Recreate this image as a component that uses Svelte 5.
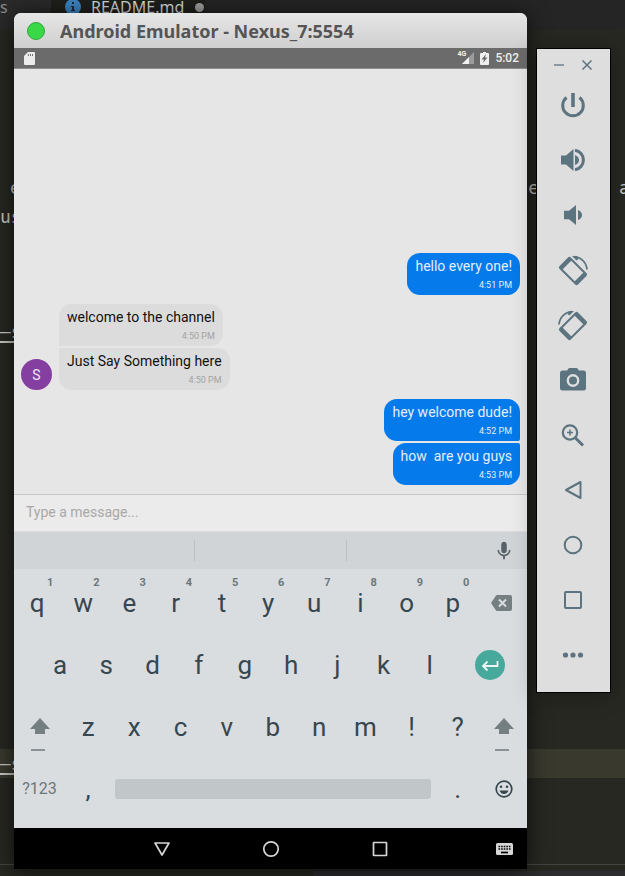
<script>
  const messages = [
    { side: 'sent', items: [{ text: 'hello every one!', time: '4:51 PM' }] },
    {
      side: 'received',
      avatar: 'S',
      items: [
        { text: 'welcome to the channel', time: '4:50 PM' },
        { text: 'Just Say Something here', time: '4:50 PM' }
      ]
    },
    {
      side: 'sent',
      items: [
        { text: 'hey welcome dude!', time: '4:52 PM' },
        { text: 'how  are you guys', time: '4:53 PM' }
      ]
    }
  ];
  const rowOne = [...'qwertyuiop'].map((letter, i) => ({ letter, digit: (i + 1) % 10 }));
  const rowTwo = [...'asdfghjkl'];
  const rowThree = [...'zxcvbnm!?'];
  let draft = $state('');
</script>

{#snippet shiftKey()}
  <button class="key shift" aria-label="Shift">
    <svg width="22" height="36" viewBox="0 0 22 36">
      <path d="M11 1 21 12h-5v5H6v-5H1z" fill="#757f82" />
      <path d="M2 32h14v2H2z" fill="#8b9295" />
    </svg>
  </button>
{/snippet}

<div class="desktop">
  <div class="editor" aria-hidden="true">
    <div class="tabs">
      <div class="tab first">s</div>
      <div class="tab active">
        <svg width="16" height="16" viewBox="0 0 16 16">
          <circle cx="8" cy="7" r="8" fill="#3a86c6" />
          <path d="M7 2h2v2H7zM6 6h3v4h1v1H6v-1h1V7H6z" fill="#1d2a36" />
        </svg>
        <span>README.md</span>
        <i class="dirty"></i>
      </div>
    </div>
    <div class="code">
      <div class="line split"><span class="lead">e</span><span>e</span><span class="last">a</span></div>
      <div class="line">us</div>
      <div class="line rule"><u>—s</u></div>
      <div class="line current"><u>—s</u></div>
    </div>
    <div class="panel"><div></div></div>
  </div>

  <main class="emulator">
    <header class="title">
      <button class="dot" aria-label="Window menu"></button>
      <h1>Android Emulator - Nexus_7:5554</h1>
    </header>

    <div class="status">
      <svg width="11" height="13" viewBox="0 0 11 13">
        <path d="M4 0h6q1 0 1 1v11q0 1-1 1H1q-1 0-1-1V4z" fill="#ececec" />
        <path d="M4 2h1v2H4zM6 2h1v2H6zM8 2h1v2H8z" fill="#777" />
      </svg>
      <div class="indicators">
        <span class="net">4G</span>
        <svg width="12" height="12" viewBox="0 0 12 12">
          <path d="M12 0v12H0z" fill="#9b9b9b" />
          <path d="M7 5v7H0z" fill="#f0f0f0" />
        </svg>
        <svg class="battery" width="9" height="13" viewBox="0 0 9 13">
          <path d="M3 0h3v1h2q1 0 1 1v10q0 1-1 1H1q-1 0-1-1V2q0-1 1-1h2z" fill="#f0f0f0" />
          <path d="M6 2 1.500 7.500H4L3 11l4.500-5.500H5z" fill="#6b6b6b" />
        </svg>
        <time>5:02</time>
      </div>
    </div>

    <section class="chat">
      {#each messages as group}
        <div class="group {group.side}">
          {#if group.avatar}<div class="avatar">{group.avatar}</div>{/if}
          <div class="stack">
            {#each group.items as item}
              <div class="bubble">
                <p>{item.text}</p>
                <time>{item.time}</time>
              </div>
            {/each}
          </div>
        </div>
      {/each}
    </section>

    <div class="composer">
      <input type="text" aria-label="Message" placeholder="Type a message..." bind:value={draft} />
    </div>

    <section class="keyboard">
      <div class="suggest">
        <span></span>
        <span></span>
        <span></span>
        <button class="key" aria-label="Voice input">
          <svg width="22" height="22" viewBox="0 0 24 24" fill="#566268">
            <path d="M12 14.500c1.660 0 3-1.340 3-3V5c0-1.660-1.340-3-3-3S9 3.340 9 5v6.500c0 1.660 1.340 3 3 3zm5.300-3.500c0 3-2.540 5.100-5.300 5.100S6.700 14 6.700 11H5c0 3.410 2.720 6.230 6 6.720V21h2v-3.280c3.280-.480 6-3.300 6-6.720h-1.700z" />
          </svg>
        </button>
      </div>
      <div class="keys">
        <div class="row one">
          {#each rowOne as k}
            <button class="key">{k.letter}<sup>{k.digit}</sup></button>
          {/each}
          <button class="key" aria-label="Backspace">
            <svg width="21" height="16" viewBox="0 0 21 16">
              <path d="M6 0h13q2 0 2 2v12q0 2-2 2H6q-1 0-2-2L0 8l4-6q1-2 2-2z" fill="#757f82" />
              <path d="m8 4.500 7 7m0-7-7 7" stroke="#d9dde0" stroke-width="2" />
            </svg>
          </button>
        </div>
        <div class="row two">
          <span></span>
          {#each rowTwo as k}<button class="key">{k}</button>{/each}
          <button class="key" aria-label="Enter">
            <svg width="30" height="30" viewBox="0 0 30 30">
              <circle cx="15" cy="15" r="15" fill="#47a99c" />
              <path d="M22.500 11v5H8m4.500-4.500L8 16l4.500 4.500" fill="none" stroke="#eef6f5" stroke-width="1.800" />
            </svg>
          </button>
        </div>
        <div class="row three">
          {@render shiftKey()}
          {#each rowThree as k}<button class="key">{k}</button>{/each}
          {@render shiftKey()}
        </div>
        <div class="row four">
          <button class="key mode">?123</button>
          <button class="key">,</button>
          <button class="key" aria-label="Space"><i class="space"></i></button>
          <button class="key">.</button>
          <button class="key" aria-label="Emoji">
            <svg width="18" height="18" viewBox="0 0 18 18">
              <circle cx="9" cy="9" r="7.800" fill="none" stroke="#37474f" stroke-width="1.700" />
              <circle cx="6" cy="6.700" r="1.300" fill="#37474f" />
              <circle cx="12" cy="6.700" r="1.300" fill="#37474f" />
              <path d="M4.500 10.500h9Q12 14 9 14t-4.500-3.500z" fill="#37474f" />
            </svg>
          </button>
        </div>
      </div>
    </section>

    <nav class="navbar">
      <span></span>
      <button class="key" aria-label="Back">
        <svg width="18" height="18" viewBox="0 0 18 18"><path d="M2 3h14L9 15z" /></svg>
      </button>
      <button class="key" aria-label="Home">
        <svg width="18" height="18" viewBox="0 0 18 18"><circle cx="9" cy="9" r="7.200" /></svg>
      </button>
      <button class="key" aria-label="Overview">
        <svg width="18" height="18" viewBox="0 0 18 18"><rect x="2.500" y="2.500" width="13" height="13" rx="0.500" /></svg>
      </button>
      <button class="key ime" aria-label="Switch keyboard">
        <svg width="17" height="12" viewBox="0 0 17 12">
          <rect class="solid" width="17" height="12" rx="1.500" />
          <path class="holes" d="M2.500 3.500h12M2.500 6h12" stroke-dasharray="1.600 1" />
          <path class="holes" d="M5 9.500h7" />
        </svg>
      </button>
    </nav>
  </main>

  <aside class="tools">
    <div class="winbar">
      <button aria-label="Minimize">
        <svg width="12" height="12" viewBox="0 0 12 12"><path d="M1 6h10" stroke-width="1.300" /></svg>
      </button>
      <button aria-label="Close">
        <svg width="12" height="12" viewBox="0 0 12 12"><path d="m1.500 1.500 9 9m0-9-9 9" stroke-width="1.500" /></svg>
      </button>
    </div>
    <button aria-label="Power">
      <svg width="32" height="32" viewBox="0 0 32 32">
        <path d="M16 4v14" stroke-width="3.600" />
        <path d="M9.500 8.500a10.300 10.300 0 1 0 13 0" stroke-width="3" />
      </svg>
    </button>
    <button aria-label="Volume up">
      <svg width="32" height="32" viewBox="0 0 32 32">
        <path class="fill" d="M4 11.500h5L16.500 5v22L9 20.500H4z" />
        <path class="fill" d="M18 11q4 1.500 4 5t-4 5z" />
        <path d="M18 6.300a9.800 9.800 0 0 1 0 19.400" stroke-width="3" />
      </svg>
    </button>
    <button aria-label="Volume down">
      <svg width="32" height="32" viewBox="0 0 32 32">
        <path class="fill" d="M7 11.800h5L19 6v20l-7-5.800H7z" />
        <path class="fill" d="M21 11q4 1.500 4 5t-4 5z" />
      </svg>
    </button>
    <button aria-label="Rotate left">
      <svg width="32" height="32" viewBox="0 0 32 32">
        <path class="fill" fill-rule="evenodd" transform="rotate(45 16 17)" d="M5 9h22q2 0 2 2v12q0 2-2 2H5q-2 0-2-2V11q0-2 2-2zM7.500 11v12h17V11z" />
        <path d="M17 2.600A13.800 13.800 0 0 1 30 15.500" stroke-width="1.700" />
        <path class="fill" d="M15 2h5l1.500 3-2 1.500z" />
      </svg>
    </button>
    <button aria-label="Rotate right">
      <svg width="32" height="32" viewBox="0 0 32 32">
        <g transform="matrix(-1 0 0 1 32 0)">
          <path class="fill" fill-rule="evenodd" transform="rotate(45 16 17)" d="M5 9h22q2 0 2 2v12q0 2-2 2H5q-2 0-2-2V11q0-2 2-2zM7.500 11v12h17V11z" />
          <path d="M17 2.600A13.800 13.800 0 0 1 30 15.500" stroke-width="1.700" />
          <path class="fill" d="M15 2h5l1.500 3-2 1.500z" />
        </g>
      </svg>
    </button>
    <button aria-label="Take screenshot">
      <svg width="32" height="32" viewBox="0 0 32 32">
        <path class="fill" d="M12 4h8l2 2.500h4.500Q29 6.500 29 9v15q0 2.500-2.500 2.500h-21Q3 26.500 3 24V9q0-2.500 2.500-2.500H10z" />
        <circle class="lens" cx="16" cy="16.500" r="5.200" stroke-width="2.400" />
      </svg>
    </button>
    <button aria-label="Zoom in">
      <svg width="32" height="32" viewBox="0 0 32 32">
        <circle cx="13" cy="13.500" r="7.200" stroke-width="2.200" />
        <path d="M13 10.500v6m-3-3h6" stroke-width="1.500" />
        <path d="m18.500 19 7.500 7.500" stroke-width="3" />
      </svg>
    </button>
    <button aria-label="Back">
      <svg width="32" height="32" viewBox="0 0 32 32"><path d="M9 16 23.500 8v16z" stroke-width="2" stroke-linejoin="round" /></svg>
    </button>
    <button aria-label="Home">
      <svg width="32" height="32" viewBox="0 0 32 32"><circle cx="16" cy="16" r="8.300" stroke-width="2" /></svg>
    </button>
    <button aria-label="Overview">
      <svg width="32" height="32" viewBox="0 0 32 32"><rect x="8" y="8" width="16" height="16" rx="1" stroke-width="2" /></svg>
    </button>
    <button aria-label="More">
      <svg width="32" height="32" viewBox="0 0 32 32">
        <circle class="fill" cx="8.500" cy="16" r="2.600" /><circle class="fill" cx="16" cy="16" r="2.600" /><circle class="fill" cx="23.500" cy="16" r="2.600" />
      </svg>
    </button>
  </aside>
</div>

<style>
  :global(body) { margin: 0; background: #272822; }
  * { box-sizing: border-box; }
  button { padding: 0; border: 0; background: none; font: inherit; color: inherit; cursor: pointer; }
  svg { display: block; flex: none; }
  h1, p { margin: 0; }

  .desktop {
    position: relative;
    display: flex;
    align-items: stretch;
    gap: 9px;
    min-height: 100vh;
    padding: 13px 14px 7px;
    overflow: hidden;
    font-family: Roboto, sans-serif;
  }

  .editor {
    position: absolute;
    inset: 0;
    display: flex;
    flex-direction: column;
    background: #272822;
    color: #c9c9c4;
    font: 18px/29px "DejaVu Sans Mono", monospace;
  }
  .tabs {
    display: flex;
    height: 29px;
    background: #252526;
    font: 16px/14px "Noto Sans", sans-serif;
  }
  .tab { width: 51px; color: #8c8c8c; background: #2a2a2a; }
  .tab.active {
    display: flex;
    align-items: flex-start;
    gap: 10px;
    width: auto;
    padding-left: 14px;
    color: #d8d8d8;
    background: #1f201c;
  }
  .dirty { width: 9px; height: 9px; margin: 3px 1px; border-radius: 50%; background: #a0a0a0; }
  .code { flex: 1; padding-top: 144px; }
  .line { height: 29px; white-space: nowrap; }
  .split { display: flex; padding-left: 10px; }
  .lead { flex: 1; }
  .last { width: 6px; margin-left: 80px; }
  .rule { margin-top: 86px; }
  .current { margin-top: 403px; background: #3a392e; }
  u { text-decoration-thickness: 2px; text-underline-offset: 3px; }
  .panel { height: 12px; border-top: 1px solid #444540; padding: 6px 0 0 50%; }
  .panel div { height: 5px; background: #2d2d30; }

  .emulator {
    position: relative;
    flex: 1;
    min-width: 0;
    display: flex;
    flex-direction: column;
    border-radius: 7px 7px 0 0;
    background: #e6e6e6;
    box-shadow: 0 2px 22px rgba(0, 0, 0, 0.7);
  }
  .title {
    display: flex;
    align-items: center;
    gap: 15px;
    height: 35px;
    padding: 0 13px;
    border-radius: 7px 7px 0 0;
    background: linear-gradient(#e6e6e6, #cfcfcf);
    color: #555;
  }
  .dot { width: 18px; height: 18px; border: 1px solid #32a83c; border-radius: 50%; background: #38d846; }
  h1 { font: 700 18px/24px "Noto Sans", sans-serif; white-space: nowrap; }

  .status {
    display: flex;
    align-items: center;
    justify-content: space-between;
    height: 21px;
    padding: 0 8px 0 10px;
    border-bottom: 1px solid #8e8e8e;
    background: #6b6b6b;
    color: #f0f0f0;
  }
  .indicators { display: flex; align-items: center; }
  .net { align-self: flex-start; margin: 2px -4px 0 0; font: 700 7px/8px Roboto, sans-serif; }
  .battery { margin: 0 6px; }
  .status time { font: 500 12px/20px Roboto, sans-serif; }

  .chat {
    flex: 1;
    display: flex;
    flex-direction: column;
    justify-content: flex-end;
    gap: 9px;
    padding: 9px 7px;
  }
  .group { display: flex; align-items: flex-end; gap: 7px; }
  .sent { justify-content: flex-end; }
  .stack { display: flex; flex-direction: column; gap: 2px; align-items: flex-start; }
  .sent .stack { align-items: flex-end; }
  .avatar {
    width: 31px;
    height: 31px;
    border-radius: 50%;
    background: #853fa0;
    color: #f0e8f3;
    font-size: 14px;
    line-height: 32px;
    text-align: center;
  }
  .bubble { height: 42px; padding: 3px 8px 0; border-radius: 13px; background: #dcdcdc; color: #111; }
  .bubble p { font-size: 14px; line-height: 20px; white-space: pre; }
  .bubble time { display: block; color: #a3a3a3; font-size: 9px; line-height: 18px; text-align: right; }
  .sent .bubble { background: #047aeb; color: #e4eefa; }
  .sent .bubble time { color: #e4eefa; }
  .received .bubble:not(:last-child) { border-bottom-left-radius: 2px; }
  .received .bubble:not(:first-child) { border-top-left-radius: 2px; }
  .sent .bubble:not(:last-child) { border-bottom-right-radius: 2px; }
  .sent .bubble:not(:first-child) { border-top-right-radius: 2px; }

  .composer { height: 38px; border-top: 1px solid #c6c6c6; border-bottom: 1px solid #dcdddd; background: #ebebeb; }
  input {
    display: block;
    width: 100%;
    height: 34px;
    padding: 0 12px;
    border: 0;
    outline: 0;
    background: transparent;
    color: #222;
    font: 14px/20px Roboto, sans-serif;
  }
  input::placeholder { color: #a8a8a8; opacity: 1; }

  .keyboard { background: #d9dde0; color: #37474f; }
  .suggest {
    display: grid;
    grid-template-columns: 181fr 152fr 133fr 47fr;
    align-items: center;
    height: 37px;
    background: #d0d4d7;
  }
  .suggest span { height: 21px; }
  .suggest span:nth-child(-n + 2) { border-right: 1px solid #bbc0c3; }
  .keys { padding: 3px 0 8px; }
  .row { display: grid; height: 62px; }
  .one { grid-template-columns: repeat(10, 231fr) 255fr; }
  .two { grid-template-columns: 115fr repeat(9, 231fr) 371fr; }
  .three { grid-template-columns: 255fr repeat(9, 231fr) 231fr; }
  .four { grid-template-columns: 255fr 231fr 1617fr 231fr 231fr; }
  .key {
    position: relative;
    display: flex;
    align-items: center;
    justify-content: center;
    min-width: 0;
    font-size: 26px;
    line-height: 30px;
  }
  .key sup {
    position: absolute;
    top: 5px;
    left: 50%;
    margin-left: 10px;
    color: #6c777b;
    font: 700 11px/12px Roboto, sans-serif;
  }
  .shift { padding-top: 16px; }
  .mode { font-size: 16px; color: #6c777b; }
  .space { width: 100%; height: 20px; margin: 0 4px; border-radius: 3px; background: #c1c6c9; }

  .navbar {
    display: grid;
    grid-template-columns: 93fr 109fr 109fr 109fr 93fr;
    height: 41px;
    background: #000;
  }
  .navbar svg { fill: none; stroke: #d6d6d6; stroke-width: 1.700; stroke-linejoin: round; }
  .navbar .solid { fill: #d6d6d6; stroke: none; }
  .navbar .holes { stroke: #000; }
  .ime { justify-content: flex-end; padding-right: 14px; }

  .tools {
    position: relative;
    align-self: flex-start;
    display: flex;
    flex-direction: column;
    width: 75px;
    margin-top: 35px;
    padding: 0 2px 10px 0;
    border: 1px solid #000;
    background: #dedede;
    box-shadow: 0 2px 22px rgba(0, 0, 0, 0.3);
  }
  .tools button { display: flex; align-items: center; justify-content: center; height: 55px; }
  .tools svg { fill: none; stroke: #5c7480; }
  .tools .fill { fill: #5c7480; stroke: none; }
  .tools .lens { stroke: #dedede; }
  .tools .winbar { display: flex; justify-content: center; gap: 16px; height: 28px; padding-top: 10px; }
  .tools .winbar button { height: 12px; }
</style>
